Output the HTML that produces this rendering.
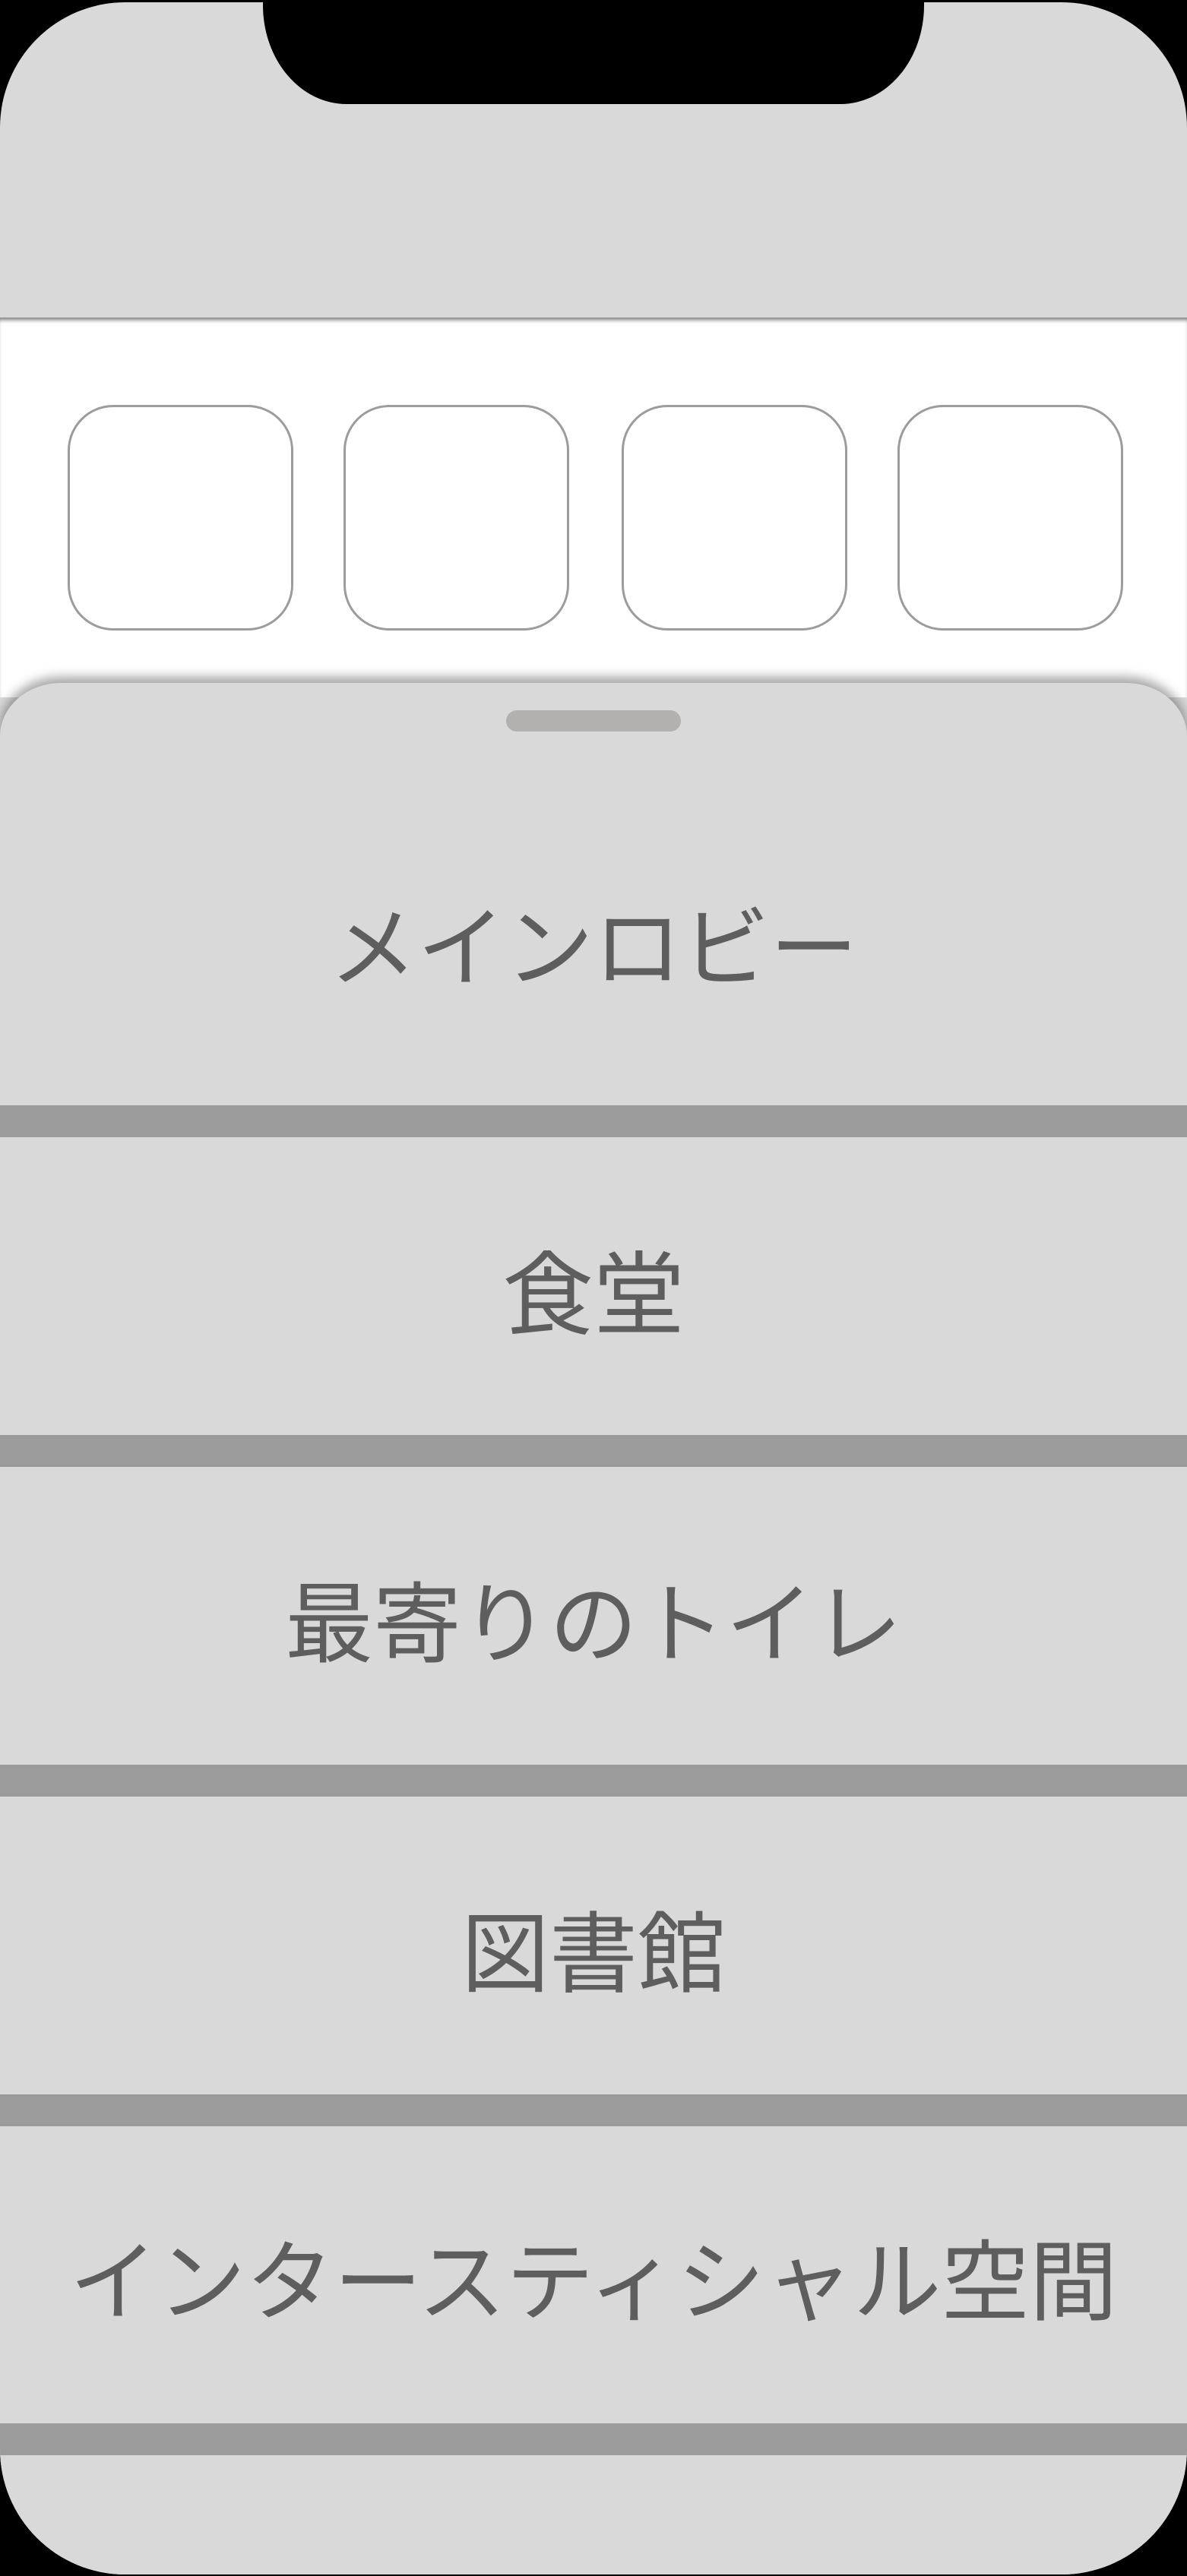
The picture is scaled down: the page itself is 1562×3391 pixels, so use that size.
<!DOCTYPE html>
<html><head><meta charset="utf-8"><style>
*{margin:0;padding:0;box-sizing:border-box}
body{width:1562px;height:3391px;background:#000;position:relative;overflow:hidden;font-family:"Liberation Sans","Noto Sans CJK JP",sans-serif}
.phone{position:absolute;left:0;top:3px;width:1562px;height:3386px;background:#d9d9d9;border-radius:165px/165px;overflow:hidden}
.notch{position:absolute;left:346px;top:-3px;width:870px;height:137px;background:#000;border-radius:0 0 110px 110px/0 0 130px 130px}
.white{position:absolute;left:0;top:415px;width:1562px;height:500px;background:#fff;box-shadow:inset 0 6px 6px -3px #777}
.icon{position:absolute;top:530px;width:297px;height:297px;border:3px solid #9c9c9c;border-radius:60px;background:#fff}
.sheet{position:absolute;left:0;top:896px;width:1562px;height:2600px;background:#d9d9d9;border-radius:80px 80px 0 0/70px 70px 0 0;box-shadow:0 -8px 14px rgba(0,0,0,.35)}
.handle{position:absolute;left:666px;top:932px;width:230px;height:28px;background:#b3b0b0;border-radius:14px}
.bar{position:absolute;left:0;width:1562px;height:42px;background:#9b9b9b}
.t{position:absolute;left:0;width:1562px;text-align:center;color:#5e5e5e;font-size:116px;line-height:140px;font-family:"Noto Sans CJK JP",sans-serif}
</style></head><body>
<div class="phone">
<div class="notch"></div>
<div class="white"></div>
<div class="icon" style="left:89px"></div>
<div class="icon" style="left:452px"></div>
<div class="icon" style="left:818px"></div>
<div class="icon" style="left:1181px"></div>
<div class="sheet"></div>
<div class="handle"></div>
<div class="t" style="top:1166px">メインロビー</div>
<div class="bar" style="top:1452px"></div>
<div class="t" style="top:1622px;font-size:120px">食堂</div>
<div class="bar" style="top:1886px"></div>
<div class="t" style="top:2056px">最寄りのトイレ</div>
<div class="bar" style="top:2320px"></div>
<div class="t" style="top:2490px">図書館</div>
<div class="bar" style="top:2754px"></div>
<div class="t" style="top:2922px;font-size:116px">インタースティシャル空間</div>
<div class="bar" style="top:3187px"></div>
</div>
</body></html>
